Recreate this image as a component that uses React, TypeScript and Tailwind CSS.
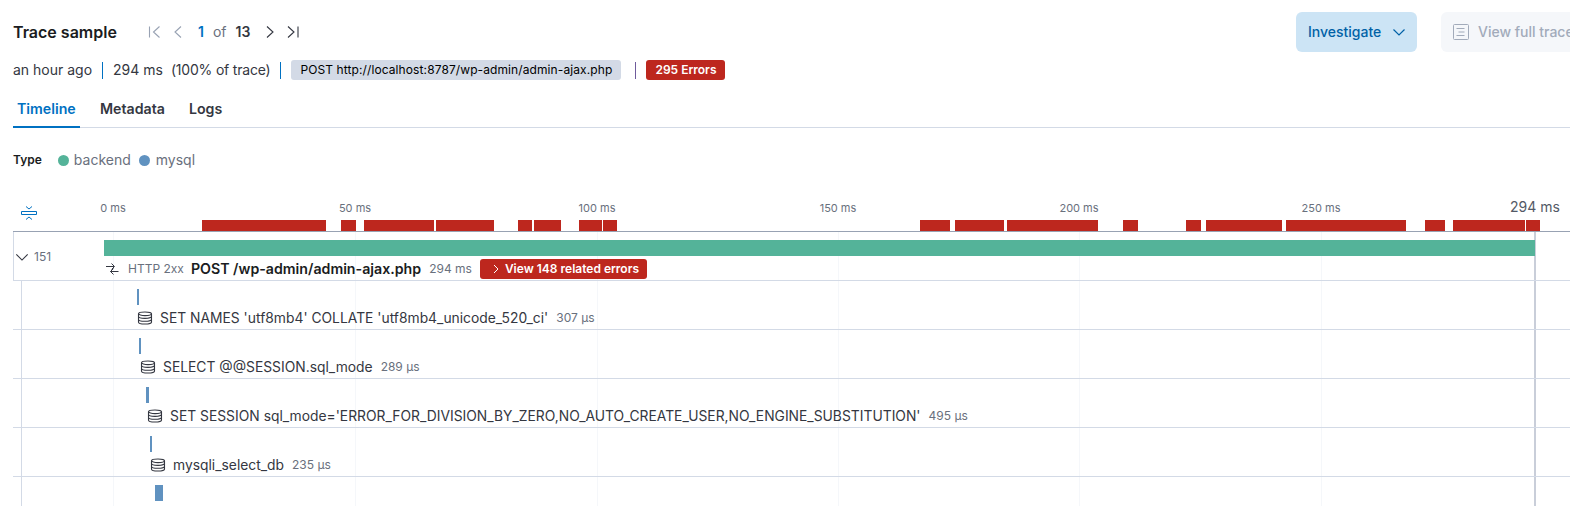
const marks = [
  [202, 326], [341, 356], [364, 434], [436, 494], [518, 532], [534, 561], [579, 602], [603, 617],
  [920, 950], [955, 1004], [1007, 1098], [1123, 1138], [1186, 1201], [1206, 1282], [1286, 1406],
  [1425, 1445], [1453, 1525], [1526, 1540],
];

const ticks = [
  { label: "0 ms", x: 113 },
  { label: "50 ms", x: 355 },
  { label: "100 ms", x: 597 },
  { label: "150 ms", x: 838 },
  { label: "200 ms", x: 1079 },
  { label: "250 ms", x: 1321 },
];

const spans = [
  { x: 137, w: 2, iconX: 137, name: "SET NAMES 'utf8mb4' COLLATE 'utf8mb4_unicode_520_ci'", time: "307 μs" },
  { x: 139, w: 2, iconX: 140, name: "SELECT @@SESSION.sql_mode", time: "289 μs" },
  { x: 146, w: 3, iconX: 147, name: "SET SESSION sql_mode='ERROR_FOR_DIVISION_BY_ZERO,NO_AUTO_CREATE_USER,NO_ENGINE_SUBSTITUTION'", time: "495 μs" },
  { x: 150, w: 2, iconX: 150, name: "mysqli_select_db", time: "235 μs" },
];

function Pager({ d, className }: { d: string; className: string }) {
  return (
    <svg width="16" height="16" viewBox="0 0 16 16" fill="none" stroke="currentColor" strokeWidth="1.1" className={className}>
      <path d={d} />
    </svg>
  );
}

function DbIcon() {
  return (
    <svg width="16" height="16" viewBox="0 0 16 16" fill="none" stroke="#343741" strokeWidth="1.1" className="shrink-0">
      <ellipse cx="8" cy="3.8" rx="6.5" ry="1.8" />
      <path d="M1.5 3.8v8.4c0 1 2.9 1.8 6.5 1.8s6.500-.8 6.500-1.800V3.800" />
      <path d="M1.500 6.600c0 1 2.900 1.800 6.500 1.800s6.500-.8 6.500-1.800M1.500 9.400c0 1 2.900 1.800 6.500 1.800s6.500-.8 6.500-1.800" />
    </svg>
  );
}

function Divider({ className }: { className: string }) {
  return <span className={`w-px h-[17px] bg-[#0071c2] ${className}`} />;
}

export default function App() {
  return (
    <div className="relative w-[1570px] h-[506px] overflow-hidden bg-white text-[#343741] font-['Inter',sans-serif]">
      <div className="flex items-center h-[40px] mt-3 pl-[13px]">
        <h3 className="w-[133px] shrink-0 text-base leading-5 font-semibold text-[#1a1c21]">Trace sample</h3>
        <div className="flex items-center w-[1150px] shrink-0 text-sm">
          <Pager d="M3.500 2.500v11M13.500 2.500 7.500 8l6 5.500" className="text-[#98a2b3]" />
          <Pager d="M11 2.500 5 8l6 5.500" className="ml-2 text-[#98a2b3]" />
          <span className="ml-3 font-semibold text-[#0071c2]">1</span>
          <span className="ml-[9px] text-[#69707d]">of</span>
          <span className="ml-[9px] font-semibold">13</span>
          <Pager d="m5 2.500 6 5.500-6 5.500" className="ml-3 text-[#343741]" />
          <Pager d="m3 2.500 6 5.500-6 5.500M13 2.500v11" className="ml-[7px] text-[#343741]" />
        </div>
        <button className="flex items-center shrink-0 w-[121px] h-10 pl-3 rounded-md bg-[#cce4f5] text-sm font-medium text-[#0061a6]">
          Investigate
          <svg width="16" height="16" viewBox="0 0 16 16" fill="none" stroke="currentColor" strokeWidth="1.2" className="ml-[10px]">
            <path d="m2.500 5.500 5.500 5.500 5.500-5.500" />
          </svg>
        </button>
        <button className="ml-6 flex items-center shrink-0 w-[160px] h-10 pl-3 rounded-md bg-[#f5f7fa] text-sm font-medium text-[#a2abba]">
          <svg width="16" height="16" viewBox="0 0 16 16" fill="none" stroke="currentColor" strokeWidth="1" className="mr-[9px]">
            <rect x="0.5" y="0.5" width="15" height="15" rx="1" />
            <path d="M3.500 4.500h8M5.500 8h6M3.500 11.500h8" />
          </svg>
          View full trace
        </button>
      </div>

      <div className="flex items-center h-5 mt-2 pl-[13px] text-sm text-[#343741]">
        <span>an hour ago</span>
        <Divider className="ml-[10px]" />
        <span className="ml-[10px]">294 ms</span>
        <span className="ml-[8px] tracking-[-0.2px]">(100% of trace)</span>
        <Divider className="ml-[10px]" />
        <span className="ml-[10px] flex items-center justify-center w-[330px] h-5 rounded-[3px] bg-[#d3dae6] text-xs tracking-[0.1px] text-black">
          POST http://localhost:8787/wp-admin/admin-ajax.php
        </span>
        <span className="ml-[14px] w-px h-[17px] bg-[#6f5b9c]" />
        <span className="ml-[10px] flex items-center h-5 px-[9px] rounded-[3px] bg-[#bd271e] text-xs font-semibold text-white">
          295 Errors
        </span>
      </div>

      <div className="flex h-[40px] mt-2 ml-[13px] border-b border-[#d3dae6] text-[14.2px] font-semibold">
        <div className="w-[67px] pl-1 pt-[10px] border-b-2 border-[#0071c2] h-[40px] text-[#0071c2]">Timeline</div>
        <div className="ml-5 pt-[10px]">Metadata</div>
        <div className="ml-6 pt-[10px]">Logs</div>
      </div>

      <div className="flex items-center h-5 mt-[22px] pl-[13px] text-sm text-[#69707d]">
        <span className="text-xs font-semibold text-[#1a1c21]">Type</span>
        <span className="ml-[16px] w-[11px] h-[11px] rounded-full bg-[#54b399]" />
        <span className="ml-[5px]">backend</span>
        <span className="ml-2 w-[11px] h-[11px] rounded-full bg-[#6092c0]" />
        <span className="ml-[6px]">mysql</span>
      </div>

      {/* timeline axis */}
      <div className="relative h-[52px] mt-[10px] border-b border-[#98a2b3] ml-[13px]">
        <svg width="16" height="16" viewBox="0 0 16 16" fill="none" stroke="#0071c2" strokeWidth="1" className="absolute left-[8px] top-[25px]">
          <path d="M.5 6.500h15v3H.5zM5 1.500l3 2.500 3-2.500M5 14.500 8 12l3 2.500" />
        </svg>
        {ticks.map((t) => (
          <span
            key={t.label}
            className="absolute top-[20px] -translate-x-1/2 text-[11px] leading-4 text-[#69707d]"
            style={{ left: t.x - 13 }}
          >
            {t.label}
          </span>
        ))}
        <span className="absolute left-[1497px] top-[17px] text-sm leading-5 text-[#535966]">294 ms</span>
        {marks.map(([a, b]) => (
          <span key={a} className="absolute bottom-0 h-[11px] bg-[#bd271e]" style={{ left: a - 13, width: b - a }} />
        ))}
      </div>

      {/* grid lines sit over the rows */}
      {ticks.map((t) => (
        <span key={t.x} className="absolute top-[232px] bottom-0 w-px bg-[#f5f7fa]" style={{ left: t.x }} />
      ))}
      <span className="absolute left-[1534px] top-[232px] bottom-0 w-0.5 bg-[#c9ced9]" />
      <span className="absolute left-[21px] top-[280px] bottom-0 w-px bg-[#d3dae6]" />

      <div className="relative ml-[13px] h-[49px] border-l border-b border-[#d3dae6]">
        <div className="absolute left-[1px] top-[17px] flex items-center text-xs text-[#69707d]">
          <svg width="14" height="14" viewBox="0 0 16 16" fill="none" stroke="#343741" strokeWidth="1.3">
            <path d="m1.500 5 6.500 6.500L14.500 5" />
          </svg>
          <span className="ml-[5px]">151</span>
        </div>
        <div className="relative ml-[90px] pt-2">
          <div className="w-[1431px] h-4 bg-[#54b399]" />
          <div className="flex items-center h-[24px] mt-[1px]">
            <svg width="14" height="14" viewBox="0 0 14 14" fill="none" stroke="#343741" strokeWidth="1" className="shrink-0 ml-[1px]">
              <path d="M1 4.500h8M6.500 1.500 9.500 4.500 6.500 7.500M13.500 9.500H5.500M8.500 6.500 5.500 9.500l3 3" />
            </svg>
            <span className="ml-[9px] text-xs text-[#69707d]">HTTP 2xx</span>
            <span className="ml-[7px] text-[14.2px] font-semibold text-[#1a1c21]">POST /wp-admin/admin-ajax.php</span>
            <span className="ml-2 text-xs text-[#69707d]">294 ms</span>
            <span className="ml-2 flex items-center h-5 pl-[11px] w-[167px] rounded-[3px] bg-[#bd271e] text-xs font-semibold text-white">
              <svg width="10" height="10" viewBox="0 0 10 10" fill="none" stroke="currentColor" strokeWidth="1" className="mr-1">
                <path d="m3 1 4 4-4 4" />
              </svg>
              View 148 related errors
            </span>
          </div>
        </div>
      </div>

      {spans.map((s) => (
        <div key={s.x} className="relative ml-[13px] h-[49px] border-b border-[#d3dae6] pt-2">
          <div className="h-4 bg-[#6092c0]" style={{ marginLeft: s.x - 13, width: s.w }} />
          <div className="flex items-center h-[24px] mt-[1px]" style={{ marginLeft: s.iconX - 13 }}>
            <DbIcon />
            <span className="ml-[7px] text-[13.85px] text-[#343741] whitespace-nowrap">{s.name}</span>
            <span className="ml-2 text-xs text-[#69707d] whitespace-nowrap">{s.time}</span>
          </div>
        </div>
      ))}

      <div className="relative ml-[155px] mt-2 w-2 h-4 bg-[#6092c0]" />
    </div>
  );
}
